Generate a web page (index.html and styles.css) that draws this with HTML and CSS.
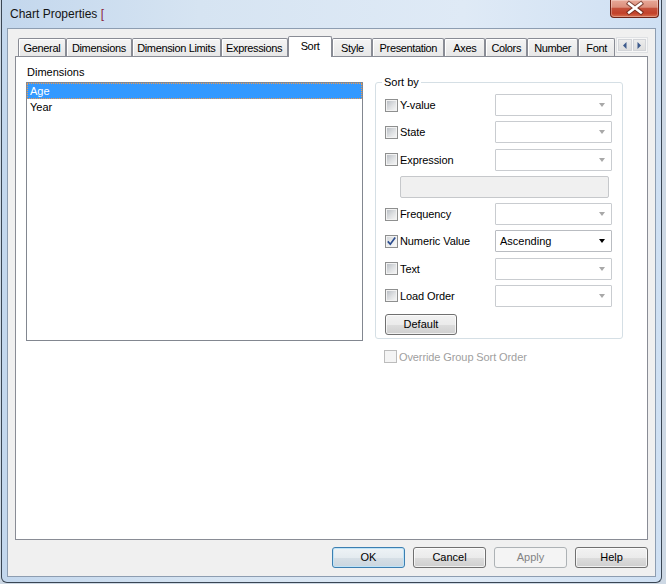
FILE: index.html
```html
<!DOCTYPE html>
<html>
<head>
<meta charset="utf-8">
<title>Chart Properties</title>
<link rel="stylesheet" href="styles.css">
</head>
<body>
<div class="window">
  <div class="titlebar">
    <span class="title">Chart Properties <span class="bracket">[</span></span>
    <div class="close-btn">
      <svg width="49" height="18" viewBox="0 0 49 18">
        <path d="M19.5 4.5 L31.5 13.5 M31.5 4.5 L19.5 13.5" stroke="#5a2418" stroke-opacity="0.7" stroke-width="4.6" stroke-linecap="square" fill="none"/>
        <path d="M19.5 4.5 L31.5 13.5 M31.5 4.5 L19.5 13.5" stroke="#ffffff" stroke-width="2.6" stroke-linecap="square" fill="none"/>
      </svg>
    </div>
  </div>
  <div class="client">
    <div class="tabstrip">
      <div class="tab">General</div>
      <div class="tab">Dimensions</div>
      <div class="tab">Dimension Limits</div>
      <div class="tab">Expressions</div>
      <div class="tab active">Sort</div>
      <div class="tab">Style</div>
      <div class="tab">Presentation</div>
      <div class="tab">Axes</div>
      <div class="tab">Colors</div>
      <div class="tab">Number</div>
      <div class="tab">Font</div>
      <div class="tab-scroll">
        <div class="scroll-btn"><svg width="4" height="7" viewBox="0 0 4 7"><path d="M3.5 0 L0 3.5 L3.5 7 Z" fill="#3d5a8c"/></svg></div>
        <div class="scroll-btn"><svg width="4" height="7" viewBox="0 0 4 7"><path d="M0.5 0 L4 3.5 L0.5 7 Z" fill="#3d5a8c"/></svg></div>
      </div>
    </div>
    <div class="panel">
      <div class="dims">
        <div class="label">Dimensions</div>
        <div class="listbox">
          <div class="item selected">Age</div>
          <div class="item">Year</div>
        </div>
      </div>
      <div class="right-col">
        <fieldset class="group">
          <legend>Sort by</legend>
          <div class="sort-grid">
            <label class="check"><span class="box"></span>Y-value</label>
            <div class="combo disabled"><span class="arrow"></span></div>

            <label class="check"><span class="box"></span>State</label>
            <div class="combo disabled"><span class="arrow"></span></div>

            <label class="check"><span class="box"></span>Expression</label>
            <div class="combo disabled"><span class="arrow"></span></div>

            <div class="exprbox"></div>

            <label class="check"><span class="box"></span>Frequency</label>
            <div class="combo disabled"><span class="arrow"></span></div>

            <label class="check"><span class="box checked"><svg width="11" height="11" viewBox="0 0 11 11"><path d="M1.8 5.4 L4.3 8.2 L9.2 1.6" stroke="#2b4c8f" stroke-width="1.7" fill="none"/></svg></span>Numeric Value</label>
            <div class="combo"><span class="value">Ascending</span><span class="arrow"></span></div>

            <label class="check"><span class="box"></span>Text</label>
            <div class="combo disabled"><span class="arrow"></span></div>

            <label class="check"><span class="box"></span>Load Order</label>
            <div class="combo disabled"><span class="arrow"></span></div>

            <div class="btn default-btn">Default</div>
          </div>
        </fieldset>
        <label class="check override"><span class="box"></span>Override Group Sort Order</label>
      </div>
    </div>
    <div class="buttons">
      <div class="btn focus">OK</div>
      <div class="btn">Cancel</div>
      <div class="btn disabled">Apply</div>
      <div class="btn">Help</div>
    </div>
  </div>
</div>
</body>
</html>
```

FILE: styles.css
```css
* { box-sizing: border-box; }
html, body { margin: 0; padding: 0; }
body {
  width: 666px;
  height: 584px;
  overflow: hidden;
  background: #cdd8e4;
  font-family: "Liberation Sans", Arial, sans-serif;
  font-size: 11px;
  color: #000;
}

.window {
  margin-left: 1px;
  width: 661px;
  height: 583px;
  border: 1px solid #3a4654;
  border-top: 0;
  border-radius: 0 0 6px 6px;
  background: linear-gradient(to right, #c3d7ed 0%, #d6e4f2 30%, #dfeaf6 70%, #cfe0f3 100%);
  padding: 0 5px 5px;
  display: flex;
  flex-direction: column;
}

.titlebar {
  height: 28px;
  display: flex;
  align-items: flex-start;
}
.title {
  margin: 7px 0 0 3px;
  font-size: 12px;
  line-height: 15px;
  color: #141414;
}
.bracket { color: #8a1d3c; }
.close-btn {
  margin-left: auto;
  margin-right: -3px;
  width: 49px;
  height: 18px;
  border: 1px solid #6d2418;
  border-top: 0;
  border-radius: 0 0 4px 4px;
  background: linear-gradient(#e8a898 0%, #db8f7c 42%, #c4503a 50%, #c2412a 78%, #d8704f 100%);
  box-shadow: inset 0 0 0 1px rgba(255, 255, 255, 0.3);
  display: flex;
  align-items: center;
  justify-content: center;
}
.close-btn svg { display: block; margin-top: -1px; margin-left: -1px; }

.client {
  height: 549px;
  border: 1px solid #8d9db1;
  background: #f0f0f0;
  padding: 7px;
  display: flex;
  flex-direction: column;
}

.tabstrip {
  height: 21px;
  margin-bottom: -1px;
  padding-left: 3px;
  display: flex;
  align-items: flex-end;
  position: relative;
  z-index: 1;
}
.tab {
  height: 18px;
  margin-bottom: 1px;
  border: 1px solid #898c95;
  border-bottom: 0;
  border-radius: 2px 2px 0 0;
  background: linear-gradient(#f4f4f4, #e7e7e7);
  box-shadow: inset 1px 1px 0 #ffffff;
  display: flex;
  align-items: center;
  justify-content: center;
  padding-top: 1px;
  white-space: nowrap;
  letter-spacing: -0.35px;
}
.tab:nth-child(1) { width: 48px; }
.tab:nth-child(2) { width: 66px; }
.tab:nth-child(3) { width: 89px; }
.tab:nth-child(4) { width: 67px; }
.tab:nth-child(5) { width: 45px; }
.tab:nth-child(6) { width: 40px; }
.tab:nth-child(7) { width: 72px; }
.tab:nth-child(8) { width: 41px; }
.tab:nth-child(9) { width: 42px; }
.tab:nth-child(10) { width: 51px; }
.tab:nth-child(11) { width: 37px; }
.tab.active {
  height: 21px;
  margin-bottom: 0;
  background: #ffffff;
  box-shadow: none;
  align-items: flex-start;
  padding-top: 3px;
}

.tab-scroll {
  align-self: flex-start;
  margin: 1px 0 0 1px;
  width: 32px;
  height: 16px;
  display: flex;
  border: 1px solid #dfe1e4;
  background: #f7f7f7;
  padding: 1px;
  gap: 1px;
}
.scroll-btn {
  flex: 1;
  background: linear-gradient(#ececec, #dedede);
  border: 1px solid #d2d4d8;
  display: flex;
  align-items: center;
  justify-content: center;
}
.scroll-btn svg { display: block; }

.panel {
  height: 484px;
  border: 1px solid #898c95;
  background: #ffffff;
  padding: 9px 10px;
  display: flex;
  gap: 12px;
}
.dims { width: 337px; }
.label {
  line-height: 13px;
  margin-bottom: 3px;
  padding-left: 1px;
}
.listbox {
  height: 259px;
  border: 1px solid #828790;
  background: #ffffff;
}
.item {
  height: 16px;
  line-height: 14px;
  padding-left: 2px;
  border: 1px solid transparent;
}
.item.selected {
  background: #3399ff;
  color: #ffffff;
  border: 1px dotted #f09a4e;
}

.right-col {
  width: 248px;
  margin-top: 10px;
}
.group {
  margin: 0;
  border: 1px solid #d5dfe5;
  border-radius: 3px;
  padding: 5px 10px 4px 9px;
}
.group legend {
  padding: 0 2px;
  margin-left: -3px;
  line-height: 13px;
}
.sort-grid {
  display: grid;
  grid-template-columns: 110px 117px;
  grid-auto-rows: 22px;
  row-gap: 5.25px;
}

.check {
  display: flex;
  align-items: center;
  gap: 2px;
  white-space: nowrap;
  letter-spacing: -0.1px;
}
.box {
  width: 13px;
  height: 13px;
  flex: none;
  border: 1px solid #8e8f8f;
  background: linear-gradient(135deg, #b4b9c0 0%, #dfe1e3 55%, #f8f8f8 100%);
  box-shadow: inset 0 0 0 1px #f2f2f2;
  display: flex;
  align-items: center;
  justify-content: center;
}
.box.checked {
  background: linear-gradient(135deg, #cfd3d8 0%, #eceded 55%, #fbfbfb 100%);
}
.box svg { display: block; }

.combo {
  height: 22px;
  border: 1px solid #b9bcc1;
  border-radius: 1px;
  background: #ffffff;
  display: flex;
  align-items: center;
  padding: 0 6px 0 4px;
}
.combo .value { flex: 1; }
.combo .arrow {
  margin-left: auto;
  width: 0;
  height: 0;
  border-left: 3.5px solid transparent;
  border-right: 3.5px solid transparent;
  border-top: 4px solid #000000;
}
.combo.disabled { border-color: #c9ccd0; }
.combo.disabled .arrow { border-top-color: #a8a8a8; }

.exprbox {
  grid-column: 1 / span 2;
  margin-left: 15px;
  width: 209px;
  height: 22px;
  border: 1px solid #c6c8cb;
  border-radius: 2px;
  background: #f0f0f0;
}

.btn {
  width: 73px;
  height: 21px;
  border: 1px solid #707070;
  border-radius: 3px;
  background: linear-gradient(#f2f2f2 0%, #ebebeb 50%, #dddddd 51%, #cfcfcf 100%);
  box-shadow: inset 0 0 0 1px rgba(255, 255, 255, 0.7);
  display: flex;
  align-items: center;
  justify-content: center;
  line-height: 13px;
}
.default-btn {
  width: 72px;
  margin-top: 2px;
}
.btn.focus {
  border-color: #3c7fb1;
  box-shadow: inset 0 0 0 1px #bfe3f7;
  background: linear-gradient(#eef3f6 0%, #e4ebf0 50%, #d6dfe6 51%, #cad6df 100%);
}
.btn.disabled {
  border-color: #adb2b5;
  background: #f4f4f4;
  box-shadow: none;
  color: #838383;
}

.override {
  margin: 11px 0 0 9px;
  color: #a0a0a0;
}
.override .box {
  border-color: #bcbcbc;
  background: #f4f4f4;
  box-shadow: none;
}

.buttons {
  margin-top: 7px;
  display: flex;
  justify-content: flex-end;
  gap: 8px;
}
```
